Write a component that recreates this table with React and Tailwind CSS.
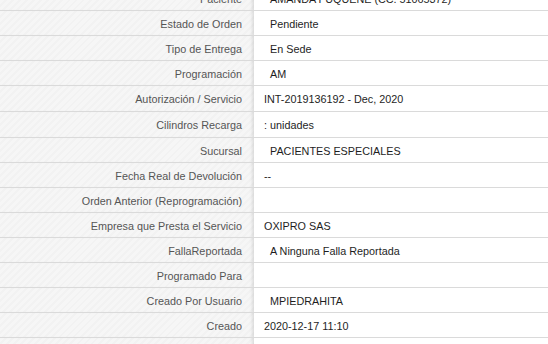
import React from 'react';

const rows = [
  { label: 'Paciente', value: 'AMANDA FUQUENE (CC. 51065372)', indent: true },
  { label: 'Estado de Orden', value: 'Pendiente', indent: true },
  { label: 'Tipo de Entrega', value: 'En Sede', indent: true },
  { label: 'Programación', value: 'AM', indent: true },
  { label: 'Autorización / Servicio', value: 'INT-2019136192 - Dec, 2020', tall: true },
  { label: 'Cilindros Recarga', value: ': unidades', tall: true },
  { label: 'Sucursal', value: 'PACIENTES ESPECIALES', indent: true },
  { label: 'Fecha Real de Devolución', value: '--' },
  { label: 'Orden Anterior (Reprogramación)', value: '' },
  { label: 'Empresa que Presta el Servicio', value: 'OXIPRO SAS' },
  { label: 'FallaReportada', value: 'A Ninguna Falla Reportada', indent: true },
  { label: 'Programado Para', value: '' },
  { label: 'Creado Por Usuario', value: 'MPIEDRAHITA', indent: true },
  { label: 'Creado', value: '2020-12-17 11:10' },
  { label: '', value: '' },
];

const stripes =
  'bg-[repeating-linear-gradient(135deg,#f6f6f6_0px,#f6f6f6_3px,#f2f2f2_3px,#f2f2f2_5px)]';

const App = () => {
  return (
    <div className="h-screen w-full overflow-hidden bg-white font-['Liberation_Sans',Arial,sans-serif] text-[10.8px]">
      <div className="-mt-[14px]">
        {rows.map((row, i) => (
          <div
            key={i}
            className={`grid grid-cols-[254px_1fr] border-b border-[#dadada] ${row.tall ? 'h-[26px]' : 'h-[25px]'}`}
          >
            <div
              className={`flex items-center justify-end pr-[12px] pt-[2px] text-[#555] ${stripes} shadow-[inset_-4px_0_3px_-2px_rgba(0,0,0,0.10)]`}
            >
              {row.label}
            </div>
            <div
              className={`flex items-center pt-[2px] text-[#1e1e1e] ${row.indent ? 'pl-[16px]' : 'pl-[10px]'}`}
            >
              {row.value}
            </div>
          </div>
        ))}
      </div>
    </div>
  );
};

export default App;
